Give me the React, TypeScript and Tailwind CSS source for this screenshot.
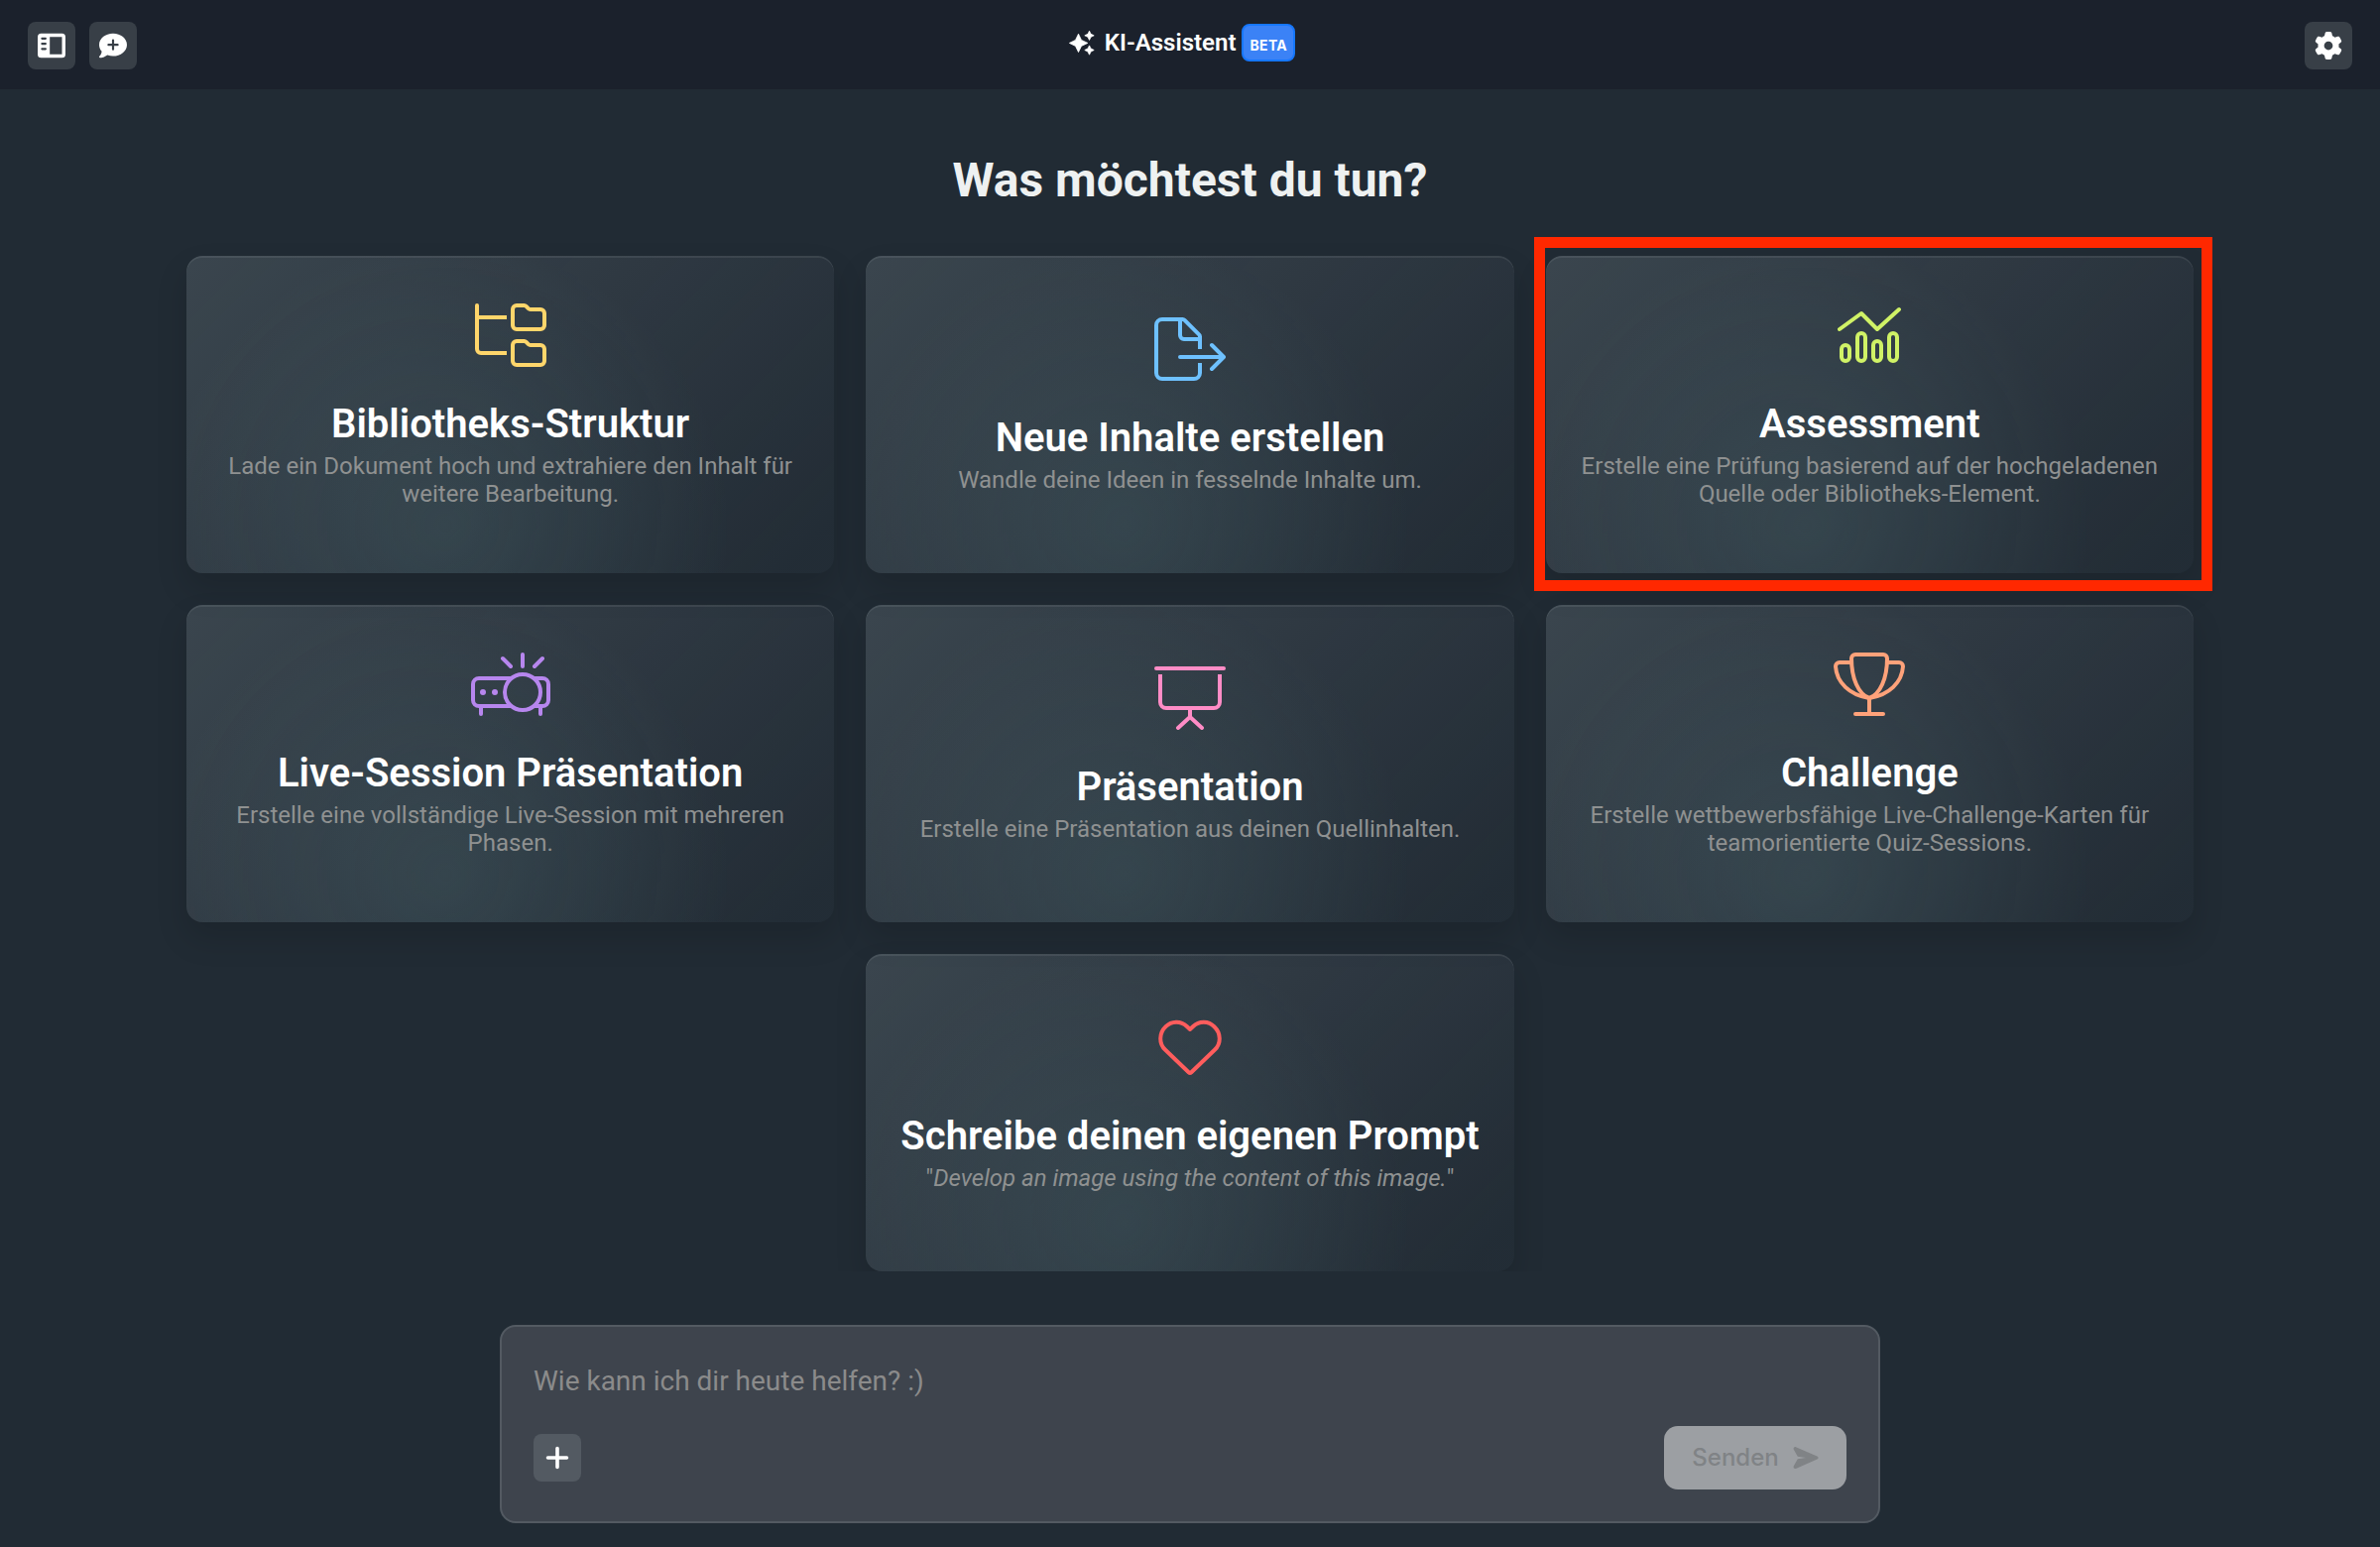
import React from 'react';

import { FaGear } from 'react-icons/fa6';

interface Action {
  title: string;
  description: React.ReactNode;
  icon: React.ReactNode;
  className?: string;
  highlighted?: boolean;
}

interface LineIconProps {
  width: number;
  className: string;
  children: React.ReactNode;
}

const LineIcon: React.FC<LineIconProps> = ({ width, className, children }) => (
  <svg
    width={width}
    height={64}
    viewBox={`0 0 ${width} 64`}
    fill="none"
    stroke="currentColor"
    strokeWidth="4"
    strokeLinejoin="round"
    className={className}
    aria-hidden="true"
  >
    {children}
  </svg>
);

const FolderTreeIcon = () => (
  <LineIcon width={72} className="text-[#ffd66b]">
    <path d="M2 2V46a4 4 0 0 0 4 4H32M2 14H32" />
    <path d="M2 2v2" strokeLinecap="round" />
    <path d="M42 2h7.5a3 3 0 0 1 2.1.9l2.2 2.2a3 3 0 0 0 2.1.9H66a4 4 0 0 1 4 4v12a4 4 0 0 1-4 4H42a4 4 0 0 1-4-4V6a4 4 0 0 1 4-4z" />
    <path d="M42 38h7.5a3 3 0 0 1 2.1.9l2.2 2.2a3 3 0 0 0 2.1.9H66a4 4 0 0 1 4 4v12a4 4 0 0 1-4 4H42a4 4 0 0 1-4-4V42a4 4 0 0 1 4-4z" />
  </LineIcon>
);

const FileExportIcon = () => (
  <LineIcon width={72} className="text-[#6ec1ff]">
    <path d="M46 32V19.5a3 3 0 0 0-.9-2.1L30.6 2.9A3 3 0 0 0 28.5 2H8a6 6 0 0 0-6 6v48a6 6 0 0 0 6 6h32a6 6 0 0 0 6-6V46" />
    <path d="M26 2V18a4 4 0 0 0 4 4H46" />
    <path d="M26 40H69M58 28l12 12-12 12" strokeLinecap="round" />
  </LineIcon>
);

const ChartIcon = () => (
  <LineIcon width={64} className="text-[#d0f266]">
    <path d="M2 26L24 10L40 26L62 6" strokeLinecap="round" />
    <rect x="4" y="42" width="8" height="16" rx="4" />
    <rect x="20" y="30" width="8" height="28" rx="4" />
    <rect x="36" y="38" width="8" height="20" rx="4" />
    <rect x="52" y="30" width="8" height="28" rx="4" />
  </LineIcon>
);

const ProjectorIcon = () => (
  <LineIcon width={80} className="text-[#b786ee]">
    <path d="M40.7 26H8a6 6 0 0 0-6 6v16a6 6 0 0 0 6 6H40.7M63.3 26H72a6 6 0 0 1 6 6v16a6 6 0 0 1-6 6H63.3" />
    <circle cx="52" cy="40" r="18" />
    <path d="M10 54v8M70 54v8M52 2v12M32 6l8 8M72 6l-8 8" strokeLinecap="round" />
    <circle cx="12" cy="40" r="3" fill="currentColor" stroke="none" />
    <circle cx="24" cy="40" r="3" fill="currentColor" stroke="none" />
  </LineIcon>
);

const PresentationIcon = () => (
  <LineIcon width={72} className="text-[#ff8cc6]">
    <path d="M2 2H70" strokeLinecap="round" />
    <path d="M6 8V36a6 6 0 0 0 6 6H60a6 6 0 0 0 6-6V8" />
    <path d="M36 42v9M24 62l12-11 12 11" strokeLinecap="round" />
  </LineIcon>
);

const TrophyIcon = () => (
  <LineIcon width={72} className="text-[#ffa27a]">
    <path d="M22 2H50a4 4 0 0 1 4 4C54 26 47 42 36 46C25 42 18 26 18 6a4 4 0 0 1 4-4z" />
    <path d="M18 10H6a4 4 0 0 0-4 4C3 30 16 43 36 46M54 10H66a4 4 0 0 1 4 4C69 30 56 43 36 46" />
    <path d="M36 46V62M22 62H50" strokeLinecap="round" />
  </LineIcon>
);

const HeartIcon = () => (
  <LineIcon width={64} className="text-[#ff5d5d]">
    <path d="M32 14l-3.2-3C22.5 5 13.3 5.5 7.6 11.2C.5 18 .5 28.5 7.2 34.8L30.6 57.3a2 2 0 0 0 2.8 0L56.8 34.8C63.5 28.5 63.5 18 56.4 11.2C50.7 5.5 41.5 5 35.2 11z" />
  </LineIcon>
);

const SidebarIcon = () => (
  <svg width="28" height="28" viewBox="0 0 28 28" aria-hidden="true">
    <path
      fill="currentColor"
      fillRule="evenodd"
      d="M3.5 1.7h21A3.5 3.5 0 0 1 28 5.2v17.6a3.5 3.5 0 0 1-3.5 3.5h-21A3.5 3.5 0 0 1 0 22.8V5.2a3.5 3.5 0 0 1 3.5-3.5zM12.2 5.2v17.6h12.3V5.2zM4.4 5.7a1 1 0 0 0 0 2.2h3.5a1 1 0 0 0 0-2.2zM4.4 11a1 1 0 0 0 0 2.2h3.5a1 1 0 0 0 0-2.2zM4.4 16.2a1 1 0 0 0 0 2.2h3.5a1 1 0 0 0 0-2.2z"
    />
  </svg>
);

const CommentPlusIcon = () => (
  <svg width="28" height="28" viewBox="0 0 512 512" aria-hidden="true">
    <path
      fill="currentColor"
      fillRule="evenodd"
      d="M256 448c141.4 0 256-93.1 256-208S397.4 32 256 32S0 125.1 0 240c0 45.1 17.7 86.8 47.7 120.9c-1.9 24.5-11.4 46.3-21.4 62.9c-5.5 9.2-11.1 16.6-15.2 21.6c-6.2 7.4-11.4 15.8-11.4 19.8c0 8.8 7.2 14.8 16 14.8c28.7 0 57.6-8.9 81.6-19.3c22.9-10 42.4-21.9 54.3-30.6c31.8 11.5 67 17.9 104.1 17.9zM236 324v-64h-64a20 20 0 0 1 0-40h64v-64a20 20 0 0 1 40 0v64h64a20 20 0 0 1 0 40h-64v64a20 20 0 0 1-40 0z"
    />
  </svg>
);

const SparklesIcon = () => (
  <svg
    width="26"
    height="26"
    viewBox="0 0 26 26"
    fill="currentColor"
    stroke="currentColor"
    strokeWidth="0.8"
    strokeLinejoin="round"
    className="mr-1"
    aria-hidden="true"
  >
    <path d="M9.5 4.2L12.5 10.4L18.8 13.4L12.5 16.4L9.5 22.6L6.5 16.4L.4 13.4L6.5 10.4z" />
    <path d="M20.5 1.2L22 4.3L25.2 5.8L22 7.3L20.5 10.4L19 7.3L15.8 5.8L19 4.3zM20.5 15.9L22 19L25.2 20.5L22 22L20.5 25.2L19 22L15.8 20.5L19 19z" />
  </svg>
);

const SendIcon = () => (
  <svg width="26" height="24" viewBox="0 0 26 24" fill="currentColor" aria-hidden="true">
    <path d="M3 1.2L24.4 10.4a1.7 1.7 0 0 1 0 3.2L3 22.9C1.3 23.5 0 21.7.8 20.2L4.8 13.2L13 12L4.8 10.8L.8 3.8C0 2.3 1.3.5 3 1.2z" />
  </svg>
);

const PlusIcon = () => (
  <svg width="24" height="24" viewBox="0 0 24 24" aria-hidden="true">
    <path d="M12 2.5v19M2.5 12h19" stroke="currentColor" strokeWidth="3.6" strokeLinecap="round" />
  </svg>
);

const actions: Action[] = [
  {
    title: 'Bibliotheks-Struktur',
    description: 'Lade ein Dokument hoch und extrahiere den Inhalt für weitere Bearbeitung.',
    icon: <FolderTreeIcon />,
  },
  {
    title: 'Neue Inhalte erstellen',
    description: 'Wandle deine Ideen in fesselnde Inhalte um.',
    icon: <FileExportIcon />,
  },
  {
    title: 'Assessment',
    description: 'Erstelle eine Prüfung basierend auf der hochgeladenen Quelle oder Bibliotheks-Element.',
    icon: <ChartIcon />,
    highlighted: true,
  },
  {
    title: 'Live-Session Präsentation',
    description: 'Erstelle eine vollständige Live-Session mit mehreren Phasen.',
    icon: <ProjectorIcon />,
  },
  {
    title: 'Präsentation',
    description: 'Erstelle eine Präsentation aus deinen Quellinhalten.',
    icon: <PresentationIcon />,
  },
  {
    title: 'Challenge',
    description: 'Erstelle wettbewerbsfähige Live-Challenge-Karten für teamorientierte Quiz-Sessions.',
    icon: <TrophyIcon />,
  },
  {
    title: 'Schreibe deinen eigenen Prompt',
    description: (
      <>
        "<em>Develop an image using the content of this image.</em>"
      </>
    ),
    icon: <HeartIcon />,
    className: 'col-start-2',
  },
];

const ActionCard: React.FC<{ action: Action }> = ({ action }) => (
  <div className={`relative ${action.className ?? ''}`}>
    <button
      type="button"
      className="flex h-80 w-full flex-col items-center justify-center rounded-2xl px-8 text-center bg-[radial-gradient(circle_at_40%_85%,rgba(80,115,120,0.24),transparent_60%),linear-gradient(135deg,rgba(205,225,230,0.15),rgba(205,215,230,0.08)_50%,rgba(205,215,230,0.01)_95%)] shadow-[inset_0_2px_0_rgba(255,255,255,0.08),0_16px_32px_rgba(0,0,0,0.14)]"
    >
      {action.icon}
      <span className="mt-[34px] text-[40px] leading-12 font-semibold text-white">
        {action.title}
      </span>
      <span className="mt-1 mb-[18px] text-2xl leading-7 text-[#8f9191]">{action.description}</span>
    </button>
    {action.highlighted && (
      <div className="pointer-events-none absolute -top-[19px] -right-[19px] -bottom-[18px] -left-3 z-10 border-[11px] border-[#ff2800]" />
    )}
  </div>
);

const iconButton = 'flex size-12 items-center justify-center rounded-lg text-white';

const App: React.FC = () => {
  return (
    <div className="flex min-h-screen flex-col bg-[#212b34] font-[Roboto,sans-serif]">
      <header className="grid grid-cols-[1fr_auto_1fr] bg-[#1b212c] px-7 pt-[22px] pb-5">
        <div className="flex gap-[14px]">
          <button type="button" aria-label="Seitenleiste" className={`${iconButton} bg-[#383f47]`}>
            <SidebarIcon />
          </button>
          <button type="button" aria-label="Neuer Chat" className={`${iconButton} bg-[#383f47]`}>
            <CommentPlusIcon />
          </button>
        </div>
        <div className="flex items-center gap-1.5 pr-4 pb-1.5 text-white">
          <SparklesIcon />
          <span className="text-2xl font-semibold">KI-Assistent</span>
          <span className="flex h-[38px] items-center rounded-lg border-2 border-[#1677ff] bg-[#3b82f6] px-1.5 pt-1 font-[Inter,sans-serif] text-[14px] font-bold tracking-wide">
            BETA
          </span>
        </div>
        <button
          type="button"
          aria-label="Einstellungen"
          className={`${iconButton} justify-self-end bg-[#383f47]`}
        >
          <FaGear className="size-7" />
        </button>
      </header>

      <main className="flex-1 overflow-hidden px-[188px] pt-16">
        <h1 className="text-center text-5xl leading-14 font-bold text-[#eef1f1]">
          Was möchtest du tun?
        </h1>
        <div className="mt-12 grid grid-cols-3 gap-8">
          {actions.map(action => (
            <ActionCard key={action.title} action={action} />
          ))}
        </div>
      </main>

      <footer className="flex justify-center px-8 pt-[54px] pb-6">
        <form className="flex w-full max-w-[1392px] flex-col gap-6 rounded-2xl border-2 border-[#535a62] bg-[#3e444d] px-8 pt-8 pb-8">
          <input
            type="text"
            aria-label="Nachricht"
            placeholder="Wie kann ich dir heute helfen? :)"
            className="h-11 w-full bg-transparent text-[28px] text-white outline-none placeholder:text-[#8b8b8b]"
          />
          <div className="flex items-center justify-between">
            <button type="button" aria-label="Hinzufügen" className={`${iconButton} bg-[#535a62]`}>
              <PlusIcon />
            </button>
            <button
              type="button"
              disabled
              className="flex h-16 w-46 items-center justify-center gap-[14px] rounded-[14px] bg-[#9c9fa3] font-[Inter,sans-serif] text-2xl font-medium text-[#808386]"
            >
              Senden
              <SendIcon />
            </button>
          </div>
        </form>
      </footer>
    </div>
  );
};

export default App;
